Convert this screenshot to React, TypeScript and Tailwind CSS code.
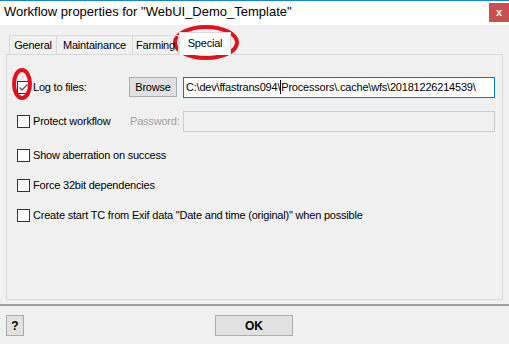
import React from "react";

function Check({ checked = false }: { checked?: boolean }) {
  return (
    <div className="w-[13px] h-[13px] border border-[#333333] bg-white flex items-center justify-center shrink-0">
      {checked && (
        <svg width="11" height="11" viewBox="0 0 11 11">
          <path d="M1.5 5.5 L4 8 L9.5 2.5" fill="none" stroke="#555555" strokeWidth="1.3" />
        </svg>
      )}
    </div>
  );
}

export default function App() {
  return (
    <div className="relative w-[509px] h-[344px] overflow-hidden bg-[#f0f0f0] text-black font-['Liberation_Sans','Noto_Sans',sans-serif] text-[11px] tracking-[-0.2px]">
      {/* title bar */}
      <div className="h-[25px] bg-white border-t border-[#1883d7] flex items-start justify-between tracking-normal">
        <span className="pl-[4px] pt-[3px] text-[13px] leading-[16px]">Workflow properties for "WebUI_Demo_Template"</span>
        <div className="mt-[2px] w-[20px] h-[19px] bg-[#c75050] flex items-center justify-center text-white font-bold text-[11px] leading-none">
          x
        </div>
      </div>

      {/* body */}
      <div className="px-[6px] flex flex-col">
        {/* tabs */}
        <div className="mt-[7px] h-[23px] -mb-px pl-[3px] flex items-end relative z-10">
          <div className="w-[48px] h-[20px] border border-b-0 border-[#d9d9d9] flex items-center justify-center">General</div>
          <div className="w-[76px] h-[20px] border border-b-0 border-l-0 border-[#d9d9d9] flex items-center justify-center">Maintainance</div>
          <div className="w-[46px] h-[20px] border border-b-0 border-l-0 border-[#d9d9d9] flex items-center justify-center">Farming</div>
          <div className="w-[52px] h-[23px] border border-b-0 border-[#d9d9d9] bg-white flex items-center justify-center pb-[2px]">Special</div>
        </div>

        {/* panel */}
        <div className="h-[246px] border border-[#d9d9d9] bg-[#f0f0f0] pl-[10px] pt-[21px] flex flex-col">
          {/* row 1 */}
          <div className="h-[22px] flex items-center">
            <div className="w-[112px] flex items-center">
              <Check checked />
              <span className="ml-[3px]">Log to files:</span>
            </div>
            <div className="w-[48px] h-[20px] bg-[#e1e1e1] border border-[#adadad] flex items-center justify-center">Browse</div>
            <div className="ml-[6px] w-[312px] h-[21px] bg-white border border-[#0078d7] pl-[2px] flex items-center overflow-hidden whitespace-nowrap">
              <span>C:\dev\ffastrans094\</span>
              <span className="inline-block w-px h-[14px] bg-black"></span>
              <span>Processors\.cache\wfs\20181226214539\</span>
            </div>
          </div>

          {/* row 2 */}
          <div className="mt-[12px] h-[22px] flex items-center">
            <div className="w-[113px] flex items-center">
              <Check />
              <span className="ml-[3px]">Protect workflow</span>
            </div>
            <div className="w-[53px] text-[#a0a0a0]">Password:</div>
            <div className="w-[312px] h-[21px] bg-[#f0f0f0] border border-[#cccccc]"></div>
          </div>

          {/* row 3 */}
          <div className="mt-[12px] h-[22px] flex items-center">
            <Check />
            <span className="ml-[3px]">Show aberration on success</span>
          </div>

          {/* row 4 */}
          <div className="mt-[8px] h-[22px] flex items-center">
            <Check />
            <span className="ml-[3px]">Force 32bit dependencies</span>
          </div>

          {/* row 5 */}
          <div className="mt-[8px] h-[22px] flex items-center">
            <Check />
            <span className="ml-[3px]">Create start TC from Exif data "Date and time (original)" when possible</span>
          </div>
        </div>
      </div>

      {/* separator */}
      <div className="mt-[4px] h-[2px] bg-[#a0a0a0]"></div>

      {/* bottom buttons */}
      <div className="mt-[9px] px-[6px] flex items-center tracking-normal">
        <div className="w-[18px] h-[21px] bg-[#e1e1e1] border border-[#adadad] flex items-center justify-center font-bold text-[12px]">?</div>
        <div className="ml-[191px] w-[78px] h-[21px] bg-[#e1e1e1] border border-[#adadad] flex items-center justify-center font-bold text-[12px]">OK</div>
      </div>

      {/* red annotation ovals */}
      <svg className="absolute left-0 top-0 pointer-events-none" width="509" height="344">
        <ellipse cx="206" cy="42.5" rx="31" ry="15.5" fill="none" stroke="#e3101b" strokeWidth="4" />
        <ellipse cx="22" cy="84" rx="8" ry="14" fill="none" stroke="#e3101b" strokeWidth="4" />
      </svg>
    </div>
  );
}
